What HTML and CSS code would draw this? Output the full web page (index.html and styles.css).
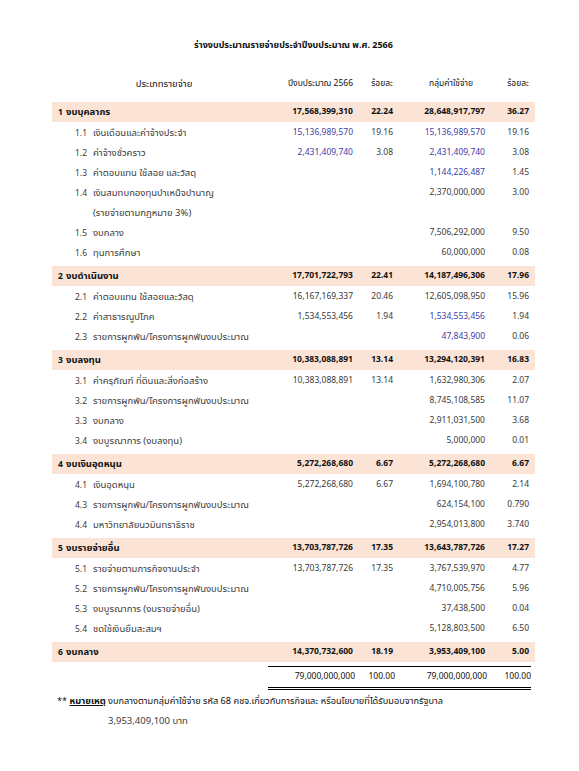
FILE: index.html
```html
<!DOCTYPE html>
<html lang="th">

<head>
    <meta charset="UTF-8">
    <meta name="viewport" content="width=device-width, initial-scale=1.0">
    <title>ร่างงบประมาณรายจ่ายประจำปีงบประมาณ พ.ศ. 2566</title>
    <link rel="stylesheet" href="styles.css">
</head>

<body>
    <div class="sheet">
        <h1>ร่างงบประมาณรายจ่ายประจำปีงบประมาณ พ.ศ. 2566</h1>

        <div class="row head">
            <div class="label">ประเภทรายจ่าย</div>
            <div class="num">ปีงบประมาณ 2566</div>
            <div class="pct">ร้อยละ</div>
            <div class="num group-col">กลุ่มค่าใช้จ่าย</div>
            <div class="pct">ร้อยละ</div>
        </div>

        <!-- 1 -->
        <div class="row group">
            <div class="label"><span class="no">1</span>งบบุคลากร</div>
            <div class="num">17,568,399,310</div>
            <div class="pct">22.24</div>
            <div class="num">28,648,917,797</div>
            <div class="pct">36.27</div>
        </div>
        <div class="row">
            <div class="label"><span class="no">1.1</span>เงินเดือนและค่าจ้างประจำ</div>
            <div class="num link">15,136,989,570</div>
            <div class="pct">19.16</div>
            <div class="num link">15,136,989,570</div>
            <div class="pct">19.16</div>
        </div>
        <div class="row">
            <div class="label"><span class="no">1.2</span>ค่าจ้างชั่วคราว</div>
            <div class="num link">2,431,409,740</div>
            <div class="pct">3.08</div>
            <div class="num link">2,431,409,740</div>
            <div class="pct">3.08</div>
        </div>
        <div class="row">
            <div class="label"><span class="no">1.3</span>ค่าตอบแทน ใช้สอย และวัสดุ</div>
            <div class="num"></div>
            <div class="pct"></div>
            <div class="num link">1,144,226,487</div>
            <div class="pct">1.45</div>
        </div>
        <div class="row">
            <div class="label"><span class="no">1.4</span>เงินสมทบกองทุนบำเหน็จบำนาญ</div>
            <div class="num"></div>
            <div class="pct"></div>
            <div class="num">2,370,000,000</div>
            <div class="pct">3.00</div>
        </div>
        <div class="row">
            <div class="label"><span class="no"></span>(รายจ่ายตามกฎหมาย 3%)</div>
        </div>
        <div class="row">
            <div class="label"><span class="no">1.5</span>งบกลาง</div>
            <div class="num"></div>
            <div class="pct"></div>
            <div class="num">7,506,292,000</div>
            <div class="pct">9.50</div>
        </div>
        <div class="row">
            <div class="label"><span class="no">1.6</span>ทุนการศึกษา</div>
            <div class="num"></div>
            <div class="pct"></div>
            <div class="num">60,000,000</div>
            <div class="pct">0.08</div>
        </div>

        <!-- 2 -->
        <div class="row group">
            <div class="label"><span class="no">2</span>งบดำเนินงาน</div>
            <div class="num">17,701,722,793</div>
            <div class="pct">22.41</div>
            <div class="num">14,187,496,306</div>
            <div class="pct">17.96</div>
        </div>
        <div class="row">
            <div class="label"><span class="no">2.1</span>ค่าตอบแทน ใช้สอยและวัสดุ</div>
            <div class="num">16,167,169,337</div>
            <div class="pct">20.46</div>
            <div class="num">12,605,098,950</div>
            <div class="pct">15.96</div>
        </div>
        <div class="row">
            <div class="label"><span class="no">2.2</span>ค่าสาธารณูปโภค</div>
            <div class="num">1,534,553,456</div>
            <div class="pct">1.94</div>
            <div class="num link">1,534,553,456</div>
            <div class="pct">1.94</div>
        </div>
        <div class="row">
            <div class="label"><span class="no">2.3</span>รายการผูกพัน/โครงการผูกพันงบประมาณ</div>
            <div class="num"></div>
            <div class="pct"></div>
            <div class="num link">47,843,900</div>
            <div class="pct">0.06</div>
        </div>

        <!-- 3 -->
        <div class="row group">
            <div class="label"><span class="no">3</span>งบลงทุน</div>
            <div class="num">10,383,088,891</div>
            <div class="pct">13.14</div>
            <div class="num">13,294,120,391</div>
            <div class="pct">16.83</div>
        </div>
        <div class="row">
            <div class="label"><span class="no">3.1</span>ค่าครุภัณฑ์ ที่ดินและสิ่งก่อสร้าง</div>
            <div class="num">10,383,088,891</div>
            <div class="pct">13.14</div>
            <div class="num">1,632,980,306</div>
            <div class="pct">2.07</div>
        </div>
        <div class="row">
            <div class="label"><span class="no">3.2</span>รายการผูกพัน/โครงการผูกพันงบประมาณ</div>
            <div class="num"></div>
            <div class="pct"></div>
            <div class="num">8,745,108,585</div>
            <div class="pct">11.07</div>
        </div>
        <div class="row">
            <div class="label"><span class="no">3.3</span>งบกลาง</div>
            <div class="num"></div>
            <div class="pct"></div>
            <div class="num">2,911,031,500</div>
            <div class="pct">3.68</div>
        </div>
        <div class="row">
            <div class="label"><span class="no">3.4</span>งบบูรณาการ (งบลงทุน)</div>
            <div class="num"></div>
            <div class="pct"></div>
            <div class="num">5,000,000</div>
            <div class="pct">0.01</div>
        </div>

        <!-- 4 -->
        <div class="row group">
            <div class="label"><span class="no">4</span>งบเงินอุดหนุน</div>
            <div class="num">5,272,268,680</div>
            <div class="pct">6.67</div>
            <div class="num">5,272,268,680</div>
            <div class="pct">6.67</div>
        </div>
        <div class="row">
            <div class="label"><span class="no">4.1</span>เงินอุดหนุน</div>
            <div class="num">5,272,268,680</div>
            <div class="pct">6.67</div>
            <div class="num">1,694,100,780</div>
            <div class="pct">2.14</div>
        </div>
        <div class="row">
            <div class="label"><span class="no">4.3</span>รายการผูกพัน/โครงการผูกพันงบประมาณ</div>
            <div class="num"></div>
            <div class="pct"></div>
            <div class="num">624,154,100</div>
            <div class="pct">0.790</div>
        </div>
        <div class="row">
            <div class="label"><span class="no">4.4</span>มหาวิทยาลัยนวมินทราธิราช</div>
            <div class="num"></div>
            <div class="pct"></div>
            <div class="num">2,954,013,800</div>
            <div class="pct">3.740</div>
        </div>

        <!-- 5 -->
        <div class="row group">
            <div class="label"><span class="no">5</span>งบรายจ่ายอื่น</div>
            <div class="num">13,703,787,726</div>
            <div class="pct">17.35</div>
            <div class="num">13,643,787,726</div>
            <div class="pct">17.27</div>
        </div>
        <div class="row">
            <div class="label"><span class="no">5.1</span>รายจ่ายตามภารกิจงานประจำ</div>
            <div class="num">13,703,787,726</div>
            <div class="pct">17.35</div>
            <div class="num">3,767,539,970</div>
            <div class="pct">4.77</div>
        </div>
        <div class="row">
            <div class="label"><span class="no">5.2</span>รายการผูกพัน/โครงการผูกพันงบประมาณ</div>
            <div class="num"></div>
            <div class="pct"></div>
            <div class="num">4,710,005,756</div>
            <div class="pct">5.96</div>
        </div>
        <div class="row">
            <div class="label"><span class="no">5.3</span>งบบูรณาการ (งบรายจ่ายอื่น)</div>
            <div class="num"></div>
            <div class="pct"></div>
            <div class="num">37,438,500</div>
            <div class="pct">0.04</div>
        </div>
        <div class="row">
            <div class="label"><span class="no">5.4</span>ชดใช้เงินยืมสะสมฯ</div>
            <div class="num"></div>
            <div class="pct"></div>
            <div class="num">5,128,803,500</div>
            <div class="pct">6.50</div>
        </div>

        <!-- 6 -->
        <div class="row group">
            <div class="label"><span class="no">6</span>งบกลาง</div>
            <div class="num">14,370,732,600</div>
            <div class="pct">18.19</div>
            <div class="num">3,953,409,100</div>
            <div class="pct">5.00</div>
        </div>

        <!-- total -->
        <div class="row total">
            <div class="label"></div>
            <div class="num">79,000,000,000</div>
            <div class="pct">100.00</div>
            <div class="num">79,000,000,000</div>
            <div class="pct">100.00</div>
        </div>

        <p class="note">** <b>หมายเหตุ</b> งบกลางตามกลุ่มค่าใช้จ่าย รหัส 68 คชจ.เกี่ยวกับการกิจและ หรือนโยบายที่ได้รับมอบจากรัฐบาล</p>
        <p class="note-amount">3,953,409,100 บาท</p>
    </div>
</body>

</html>
```

FILE: styles.css
```css
/* General styles */
* {
    box-sizing: border-box;
    margin: 0;
    padding: 0;
}

:root {
    --band-color: #fbe4d5;
    --text-color: #3a3a3a;
    --dark-color: #111111;
    --link-color: #4040a8;
}

body {
    background-color: #ffffff;
    color: var(--text-color);
    font-family: "Noto Sans Thai", "Tahoma", "Noto Sans", "DejaVu Sans", sans-serif;
    font-size: 8.5px;
    line-height: 20px;
}

.sheet {
    width: 483px;
    margin-left: 52px;
    padding-top: 35px;
}

h1 {
    text-align: center;
    font-size: 9px;
    font-weight: bold;
    color: var(--dark-color);
    line-height: 20px;
    margin-bottom: 19px;
}

/* Rows */
.row {
    display: grid;
    grid-template-columns: 212px 83px 40px 92px 44px;
    padding: 0 6px;
    height: 20px;
}

.num,
.pct {
    text-align: right;
    white-space: nowrap;
}

.label {
    white-space: nowrap;
    font-size: 9.5px;
}

.no {
    display: inline-block;
    width: 18px;
    margin-left: 17px;
    font-size: 8.5px;
}

.link {
    color: var(--link-color);
}

/* Header row */
.head {
    height: 20px;
    margin-bottom: 8px;
    color: var(--dark-color);
}

.head .label {
    text-align: center;
}

.head .group-col {
    padding-right: 12px;
}

/* Group rows */
.group {
    background-color: var(--band-color);
    font-weight: bold;
    color: var(--dark-color);
    margin-top: 3px;
    margin-bottom: 1px;
}

.group .no {
    width: 8px;
    margin-left: 0;
}

/* Total row */
.total {
    margin-top: 4px;
    height: 22px;
    line-height: 20px;
    color: var(--dark-color);
    grid-template-columns: 216px 87px 40px 92px 44px;
    padding: 0 6px 0 0;
}

.total .num,
.total .pct {
    border-top: 1px solid #000;
    border-bottom: 3px double #000;
}

/* Note */
.note {
    margin-top: 3px;
    margin-left: 5px;
    color: var(--dark-color);
    font-size: 9.2px;
    white-space: nowrap;
}

.note b {
    text-decoration: underline;
}

.note-amount {
    margin-left: 56px;
    color: var(--text-color);
    font-size: 9.5px;
}
```
